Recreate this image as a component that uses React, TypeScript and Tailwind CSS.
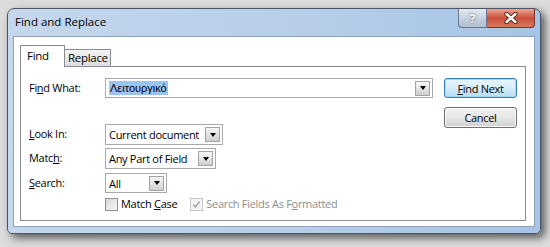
import React from 'react'

function DropButton() {
  return (
    <div className="flex h-[15px] w-[15px] items-center justify-center border border-[#a3a3a3] bg-gradient-to-b from-[#f6f6f6] via-[#e4e4e4] to-[#cfcfcf]">
      <div className="h-0 w-0 border-x-[3.5px] border-t-[4px] border-x-transparent border-t-black" />
    </div>
  )
}

function Combo({ className, children }: { className: string; children: React.ReactNode }) {
  return (
    <div className={`flex items-center justify-between border border-[#a5a9b0] bg-white pl-[3px] pr-[2px] ${className}`}>
      <span className="leading-none">{children}</span>
      <DropButton />
    </div>
  )
}

function Row({ label, className, children }: { label: React.ReactNode; className: string; children: React.ReactNode }) {
  return (
    <div className={`flex items-center ${className}`}>
      <div className="w-[76px]">{label}</div>
      {children}
    </div>
  )
}

function Check({ checked, disabled }: { checked?: boolean; disabled?: boolean }) {
  return (
    <div
      className={`flex h-[13px] w-[13px] items-center justify-center border ${
        disabled ? 'border-[#c6c6c6] bg-[#f4f4f4]' : 'border-[#8e8f8f] bg-gradient-to-br from-[#d8d8d8] to-[#f7f7f7]'
      }`}
    >
      {checked && (
        <svg width="9" height="9" viewBox="0 0 9 9">
          <path d="M1.5 4.5 L3.5 7 L7.5 1.5" fill="none" stroke="#a8a8a8" strokeWidth="1.6" />
        </svg>
      )}
    </div>
  )
}

export default function App() {
  return (
    <div className="min-h-screen whitespace-nowrap bg-[#dcdcdc] pl-[7px] pt-[8px] font-['Open_Sans',sans-serif] text-[11px] tracking-[-0.3px] text-black">
      <div className="flex h-[226px] w-[534px] flex-col rounded-b-[5px] rounded-t-[7px] border border-[#4b5565] bg-gradient-to-r from-[#c4d7ec] via-[#b8cfe9] to-[#a6c4e6] shadow-[4px_4px_9px_rgba(0,0,0,0.6)]">
        {/* title bar */}
        <div className="flex h-[27px] items-start justify-between">
          <div className="pl-[7px] pt-[4px] text-[11.5px] leading-[18px] tracking-normal">Find and Replace</div>
          <div className="mr-[5px] flex">
            <div className="flex h-[19px] w-[29px] items-center justify-center rounded-bl-[4px] border border-t-0 border-[#6c7889] bg-gradient-to-b from-[#e2e8f0] via-[#c8d3e0] to-[#aebdd0] text-[13px] font-bold leading-none text-white [text-shadow:0_0_2px_#3b4655]">
              ?
            </div>
            <div className="flex h-[19px] w-[48px] items-center justify-center rounded-br-[4px] border border-l-0 border-t-0 border-[#7b3428] bg-gradient-to-b from-[#e8a494] via-[#c9503c] to-[#d9785f]">
              <svg width="14" height="12" viewBox="0 0 14 12">
                <path d="M2.5 2 L11.5 10 M11.5 2 L2.5 10" stroke="#4a1f18" strokeWidth="4.2" strokeLinecap="round" />
                <path d="M2.5 2 L11.5 10 M11.5 2 L2.5 10" stroke="#ffffff" strokeWidth="2.4" strokeLinecap="round" />
              </svg>
            </div>
          </div>
        </div>

        {/* client area */}
        <div className="mx-[5px] mb-[6px] flex-1 border border-[#8ea1ba] bg-white pl-[6px] pt-[8px]">
          {/* tabs */}
          <div className="flex items-end">
            <div className="relative z-10 -mb-px h-[22px] w-[45px] border border-b-0 border-[#898c95] bg-white pl-[6px] pt-[1px] text-[11.5px] leading-[18px]">
              Find
            </div>
            <div className="h-[17px] w-[46px] border border-b-0 border-l-0 border-[#898c95] bg-gradient-to-b from-[#f4f4f4] to-[#dcdcdc] pl-[3px] text-[11.5px] leading-[16px]">
              Replace
            </div>
          </div>

          {/* panel */}
          <div className="flex h-[155px] w-[506px] border border-[#898c95] pl-[8px] pr-[8px] pt-[11px]">
            <div className="flex flex-1 flex-col">
              <Row
                className="h-[20px]"
                label={
                  <>
                    Fi<span className="underline">n</span>d What:
                  </>
                }
              >
                <Combo className="h-[20px] w-[328px]">
                  <span className="bg-[#9bc4ee] px-[1px] py-[1px] font-['Liberation_Sans',sans-serif] text-[11px] tracking-normal">Λειτουργικό</span>
                </Combo>
              </Row>
              <Row
                className="mt-[26px] h-[21px]"
                label={
                  <>
                    <span className="underline">L</span>ook In:
                  </>
                }
              >
                <Combo className="h-[21px] w-[118px]">Current document</Combo>
              </Row>
              <Row
                className="mt-[3px] h-[21px]"
                label={
                  <>
                    Matc<span className="underline">h</span>:
                  </>
                }
              >
                <Combo className="h-[21px] w-[111px]">Any Part of Field</Combo>
              </Row>
              <Row
                className="mt-[4px] h-[20px]"
                label={
                  <>
                    <span className="underline">S</span>earch:
                  </>
                }
              >
                <Combo className="h-[20px] w-[62px]">All</Combo>
              </Row>
              <div className="mt-[5px] flex h-[13px] items-center pl-[76px]">
                <Check />
                <span className="ml-[3px]">
                  Match <span className="underline">C</span>ase
                </span>
                <div className="ml-[13px]">
                  <Check checked disabled />
                </div>
                <span className="ml-[3px] text-[#8d8d8d]">
                  Search Fields As F<span className="underline">o</span>rmatted
                </span>
              </div>
            </div>

            <div className="flex w-[73px] flex-col gap-[9px]">
              <button className="h-[20px] rounded-[3px] border border-[#3c7fb1] bg-gradient-to-b from-[#e9f5fc] via-[#d6eefb] to-[#b7ddf5] leading-none shadow-[inset_0_0_0_1px_#9fdbf6]">
                <span className="underline">F</span>ind Next
              </button>
              <button className="h-[21px] rounded-[3px] border border-[#707070] bg-gradient-to-b from-[#f2f2f2] via-[#e6e6e6] to-[#d0d0d0] leading-none shadow-[inset_0_0_0_1px_#fbfbfb]">
                Cancel
              </button>
            </div>
          </div>
        </div>
      </div>
    </div>
  )
}
